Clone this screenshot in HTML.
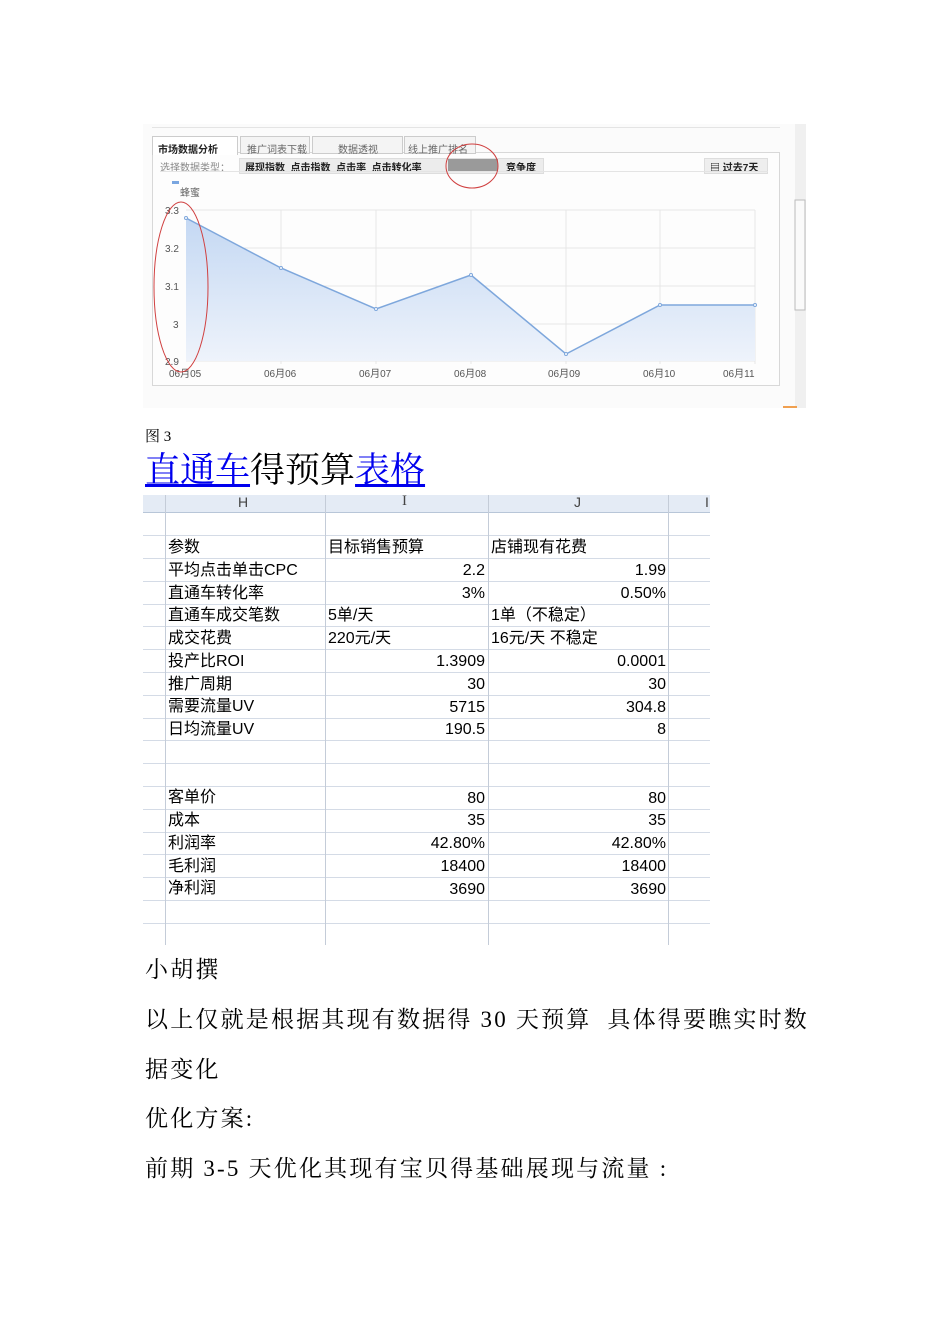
<!DOCTYPE html>
<html><head><meta charset="utf-8"><style>
body{margin:0;background:#fff;width:950px;height:1344px;position:relative;overflow:hidden;font-family:"Liberation Serif","Noto Serif CJK SC",serif}
.a{position:absolute;white-space:nowrap}
.s{font-family:"Liberation Sans","Noto Sans CJK SC",sans-serif}
.c{font-family:"Liberation Sans","WenQuanYi Zen Hei",sans-serif;font-size:16px;color:#000}
.p{font-size:23px;line-height:30px;letter-spacing:2.2px}
</style></head><body>
<div class="a" style="left:143px;top:124px;width:663px;height:284px;background:#fbfbfb"></div>
<div class="a" style="left:152px;top:127px;width:628px;height:1px;background:#e4e4e4"></div>
<div class="a" style="left:152px;top:152px;width:626px;height:232px;border:1px solid #d8d8d8;background:#fdfdfd"></div>
<div class="a" style="left:152px;top:136px;width:84px;height:18px;border:1px solid #ccc;border-bottom:none;background:#fff"></div>
<div class="a" style="left:240px;top:136px;width:68px;height:16px;border:1px solid #ccc;background:#f4f4f4"></div>
<div class="a" style="left:312px;top:136px;width:89px;height:16px;border:1px solid #ccc;background:#f4f4f4"></div>
<div class="a" style="left:404px;top:136px;width:70px;height:16px;border:1px solid #ccc;background:#f4f4f4"></div>
<div class="a s" style="left:158px;top:141px;font-size:10px;color:#222;font-weight:bold">市场数据分析</div>
<div class="a s" style="left:247px;top:141px;font-size:10px;color:#666">推广词表下载</div>
<div class="a s" style="left:338px;top:141px;font-size:10px;color:#666">数据透视</div>
<div class="a s" style="left:408px;top:141px;font-size:10px;color:#666">线上推广排名</div>
<div class="a s" style="left:160px;top:159px;font-size:10px;color:#888">选择数据类型：</div>
<div class="a" style="left:239px;top:158px;width:303px;height:14px;background:#ececec;border:1px solid #ddd"></div>
<div class="a s" style="left:245px;top:159px;font-size:10px;color:#222;font-weight:bold">展现指数&nbsp; 点击指数&nbsp; 点击率&nbsp; 点击转化率</div>
<div class="a" style="left:448px;top:159px;width:50px;height:13px;background:#9a9a9a"></div>
<div class="a s" style="left:506px;top:159px;font-size:10px;color:#222;font-weight:bold">竞争度</div>
<div class="a" style="left:704px;top:158px;width:62px;height:14px;background:#eee;border:1px solid #ddd"></div>
<div class="a s" style="left:710px;top:159px;font-size:10px;color:#222;font-weight:bold">▤ 过去7天</div>
<div class="a" style="left:160px;top:171px;width:608px;height:1px;background:#e4e4e4"></div>
<div class="a" style="left:172px;top:181px;width:7px;height:3px;background:#7aa6e0"></div>
<div class="a s" style="left:180px;top:184px;font-size:10px;color:#666">蜂蜜</div>
<svg class="a" style="left:143px;top:124px" width="663" height="284">
<defs><linearGradient id="g" x1="0" y1="0" x2="0" y2="1"><stop offset="0" stop-color="#c4d8f3"/><stop offset="1" stop-color="#eef3fb"/></linearGradient></defs>
<g stroke="#e6e6e6" stroke-width="1">
<line x1="43" y1="86" x2="612" y2="86"/><line x1="43" y1="124" x2="612" y2="124"/><line x1="43" y1="162" x2="612" y2="162"/><line x1="43" y1="200" x2="612" y2="200"/><line x1="43" y1="237" x2="612" y2="237"/>
<line x1="138" y1="86" x2="138" y2="240"/><line x1="233" y1="86" x2="233" y2="240"/><line x1="328" y1="86" x2="328" y2="240"/><line x1="423" y1="86" x2="423" y2="240"/><line x1="517" y1="86" x2="517" y2="240"/><line x1="612" y1="86" x2="612" y2="240"/>
</g>
<polygon points="43,94 138,144 233,185 328,151 423,230 517,181 612,181 612,237 43,237" fill="url(#g)"/>
<polyline points="43,94 138,144 233,185 328,151 423,230 517,181 612,181" fill="none" stroke="#7ea7dc" stroke-width="1.5"/>
<g fill="#fff" stroke="#7ea7dc"><circle cx="43" cy="94" r="1.5"/><circle cx="138" cy="144" r="1.5"/><circle cx="233" cy="185" r="1.5"/><circle cx="328" cy="151" r="1.5"/><circle cx="423" cy="230" r="1.5"/><circle cx="517" cy="181" r="1.5"/><circle cx="612" cy="181" r="1.5"/></g>
<g font-family="Liberation Sans" font-size="10" fill="#555"><text x="22" y="90">3.3</text><text x="22" y="128">3.2</text><text x="22" y="166">3.1</text><text x="30" y="204">3</text><text x="22" y="241">2.9</text>
<text x="26" y="253">06月05</text><text x="121" y="253">06月06</text><text x="216" y="253">06月07</text><text x="311" y="253">06月08</text><text x="405" y="253">06月09</text><text x="500" y="253">06月10</text><text x="580" y="253">06月11</text></g>
<ellipse cx="38" cy="163" rx="27" ry="85" fill="none" stroke="#d04040" stroke-width="1"/>
<ellipse cx="329" cy="42" rx="26" ry="22" fill="none" stroke="#d04040" stroke-width="1"/>
<rect x="652" y="0" width="11" height="284" fill="#f0f0f0"/><rect x="652" y="76" width="10" height="110" fill="#fafafa" stroke="#bbb"/>
<rect x="640" y="282" width="14" height="2" fill="#f0a050"/>
</svg>
<div class="a" style="left:145px;top:425px;font-size:15px">图 3</div>
<div class="a" style="left:145px;top:448px;font-size:35px;line-height:46px"><span style="color:#0000ee;text-decoration:underline">直通车</span>得预算<span style="color:#0000ee;text-decoration:underline">表格</span></div>
<div class="a" style="left:143px;top:495px;width:567px;height:17px;background:#e4ebf5;border-bottom:1px solid #b8c6d8"></div>
<div class="a s" style="left:238px;top:494px;font-size:14px;color:#444">H</div>
<div class="a" style="left:402px;top:493px;font-size:15px;color:#444">I</div>
<div class="a s" style="left:574px;top:494px;font-size:14px;color:#444">J</div>
<div class="a s" style="left:705px;top:494px;font-size:14px;color:#444">I</div>
<svg class="a" style="left:143px;top:495px" width="567" height="450">
<g stroke="#d4dbe6" stroke-width="1">
<line x1="0" y1="40.5" x2="567" y2="40.5"/><line x1="0" y1="63.5" x2="567" y2="63.5"/><line x1="0" y1="86.5" x2="567" y2="86.5"/><line x1="0" y1="109.5" x2="567" y2="109.5"/><line x1="0" y1="131.5" x2="567" y2="131.5"/><line x1="0" y1="154.5" x2="567" y2="154.5"/><line x1="0" y1="177.5" x2="567" y2="177.5"/><line x1="0" y1="200.5" x2="567" y2="200.5"/><line x1="0" y1="223.5" x2="567" y2="223.5"/><line x1="0" y1="245.5" x2="567" y2="245.5"/><line x1="0" y1="268.5" x2="567" y2="268.5"/><line x1="0" y1="291.5" x2="567" y2="291.5"/><line x1="0" y1="314.5" x2="567" y2="314.5"/><line x1="0" y1="337.5" x2="567" y2="337.5"/><line x1="0" y1="359.5" x2="567" y2="359.5"/><line x1="0" y1="382.5" x2="567" y2="382.5"/><line x1="0" y1="405.5" x2="567" y2="405.5"/><line x1="0" y1="428.5" x2="567" y2="428.5"/>
</g>
<g stroke="#c4ccd8"><line x1="22.5" y1="0" x2="22.5" y2="450"/><line x1="182.5" y1="0" x2="182.5" y2="450"/><line x1="345.5" y1="0" x2="345.5" y2="450"/><line x1="525.5" y1="0" x2="525.5" y2="450"/></g>
</svg>
<div class="a c" style="left:168px;top:537px;line-height:22.75px">参数<br>平均点击单击CPC<br>直通车转化率<br>直通车成交笔数<br>成交花费<br>投产比ROI<br>推广周期<br>需要流量UV<br>日均流量UV<br>&nbsp;<br>&nbsp;<br>客单价<br>成本<br>利润率<br>毛利润<br>净利润</div>
<div class="a c" style="left:328px;top:537px;line-height:22.75px">目标销售预算</div>
<div class="a c" style="left:491px;top:537px;line-height:22.75px">店铺现有花费</div>
<div class="a c" style="left:328px;top:605px;line-height:22.75px">5单/天<br>220元/天</div>
<div class="a c" style="left:491px;top:605px;line-height:22.75px">1单（不稳定）<br>16元/天 不稳定</div>
<div class="a c" style="left:325px;width:160px;top:560px;line-height:22.75px;text-align:right">2.2<br>3%<br>&nbsp;<br>&nbsp;<br>1.3909<br>30<br>5715<br>190.5<br>&nbsp;<br>&nbsp;<br>80<br>35<br>42.80%<br>18400<br>3690</div>
<div class="a c" style="left:488px;width:178px;top:560px;line-height:22.75px;text-align:right">1.99<br>0.50%<br>&nbsp;<br>&nbsp;<br>0.0001<br>30<br>304.8<br>8<br>&nbsp;<br>&nbsp;<br>80<br>35<br>42.80%<br>18400<br>3690</div>
<div class="a p" style="left:145px;top:955px">小胡撰</div>
<div class="a p" style="left:145px;top:1005px">以上仅就是根据其现有数据得 30 天预算&nbsp; 具体得要瞧实时数</div>
<div class="a p" style="left:145px;top:1055px">据变化</div>
<div class="a p" style="left:145px;top:1104px">优化方案:</div>
<div class="a p" style="left:145px;top:1154px">前期 3-5 天优化其现有宝贝得基础展现与流量 :</div>
</body></html>
